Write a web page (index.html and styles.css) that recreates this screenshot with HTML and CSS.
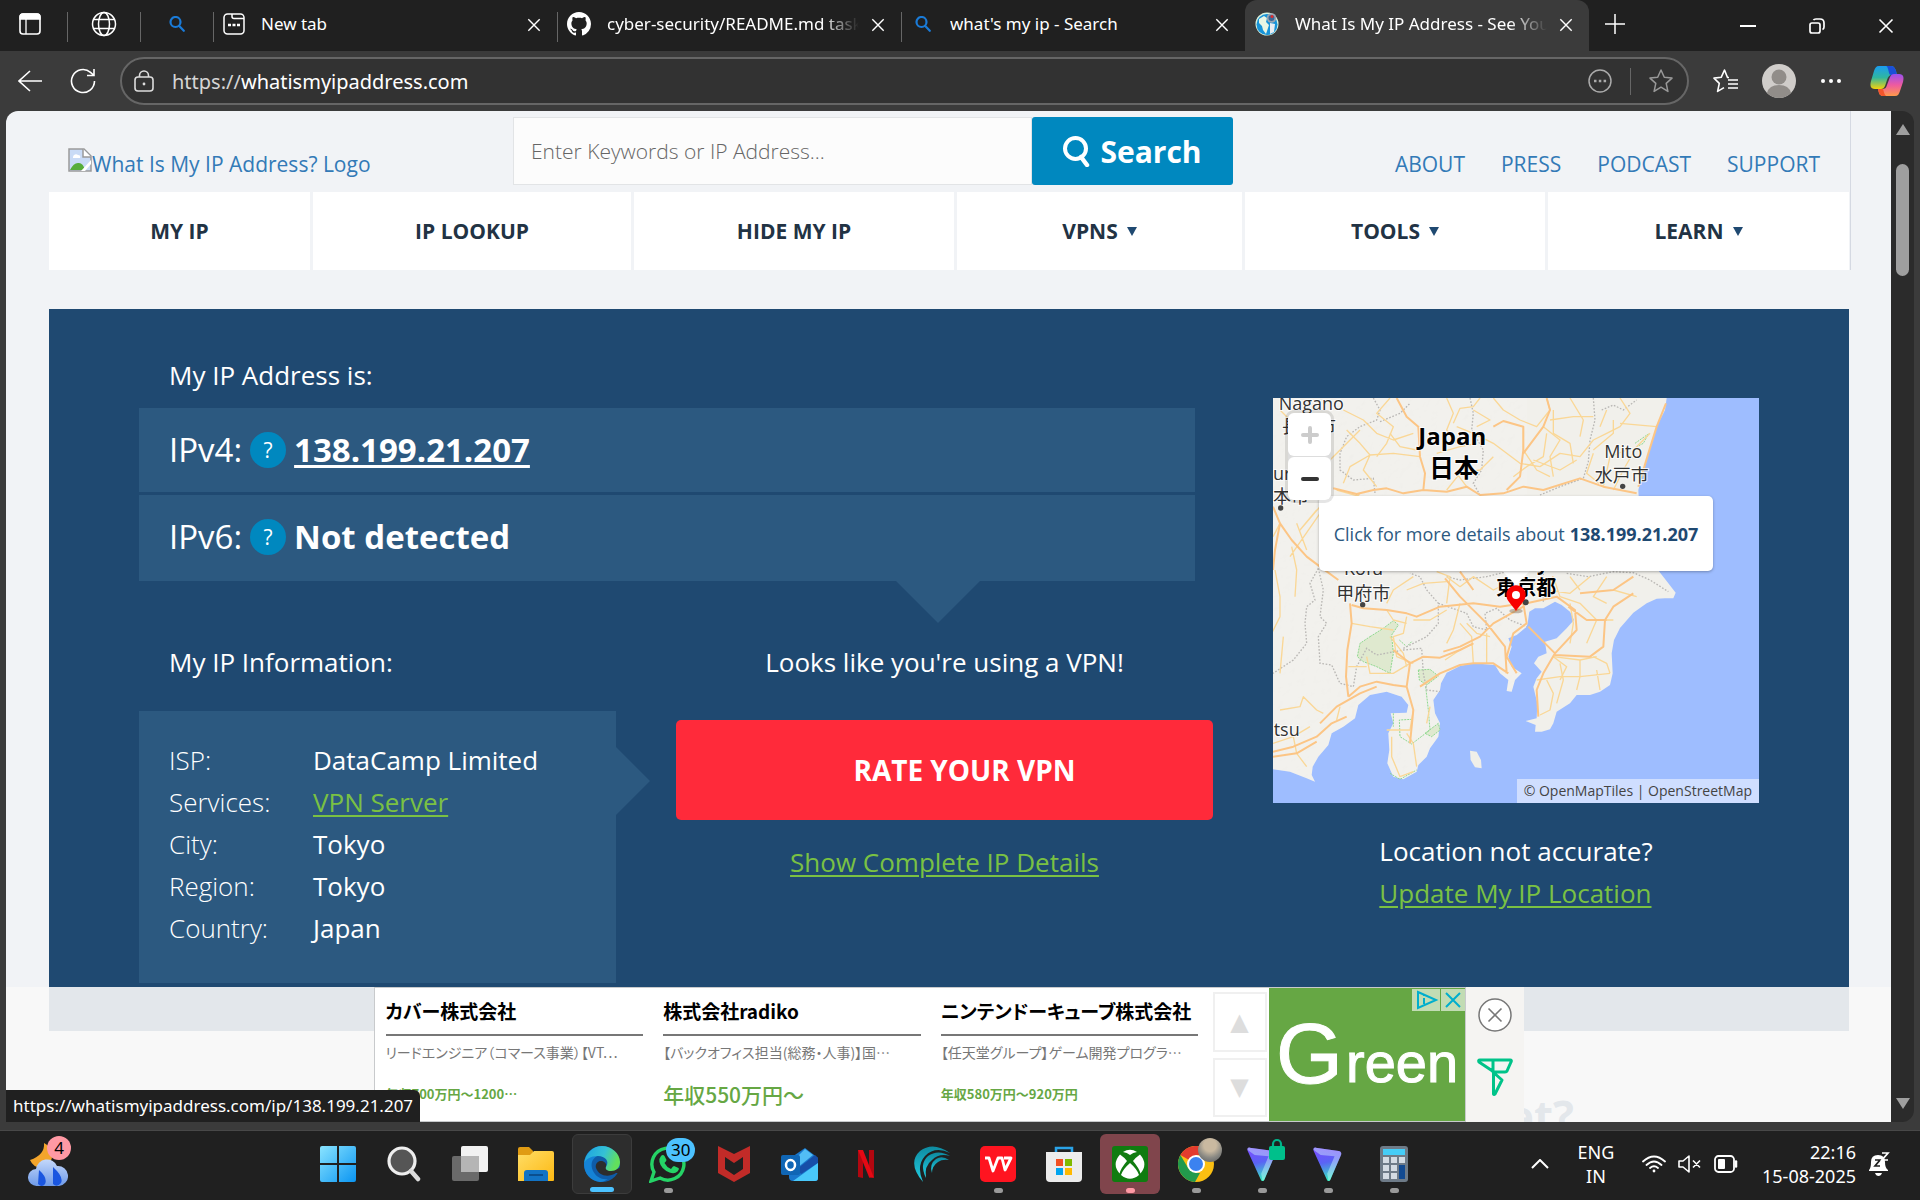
FILE: index.html
```html
<!DOCTYPE html>
<html lang="en">
<head>
<meta charset="utf-8">
<title>What Is My IP Address</title>
<link rel="stylesheet" href="styles.css">
</head>
<body>
<svg class="defs" aria-hidden="true">
  <defs>
    <symbol id="close" viewBox="0 0 16 16"><path d="M1.500 1.500l13 13M14.500 1.500l-13 13" fill="none" stroke="currentColor" stroke-width="1.600"/></symbol>
    <symbol id="lens" viewBox="0 0 16 16"><g fill="none" stroke="#1a7bd8" stroke-width="2.200" stroke-linecap="round"><circle cx="6.500" cy="6" r="5"/><path d="M10 9.800l4.800 5"/></g></symbol>
    <linearGradient id="gWin" x1="0" y1="0" x2="1" y2="1"><stop offset="0" stop-color="#8ae4ff"/><stop offset="1" stop-color="#0a95f2"/></linearGradient>
    <linearGradient id="gEdge" x1="0" y1="0" x2="1" y2="0.300"><stop offset="0" stop-color="#1ba0e2"/><stop offset="0.600" stop-color="#35c1d5"/><stop offset="1" stop-color="#62df5c"/></linearGradient>
    <linearGradient id="gFolder" x1="0" y1="0" x2="1" y2="1"><stop offset="0" stop-color="#ffdd66"/><stop offset="1" stop-color="#fdb913"/></linearGradient>
    <linearGradient id="gCop1" x1="0" y1="0" x2="0" y2="1"><stop offset="0" stop-color="#1b9df0"/><stop offset="0.500" stop-color="#2fb6a0"/><stop offset="1" stop-color="#f5d20a"/></linearGradient>
    <linearGradient id="gCop2" x1="0" y1="0" x2="0" y2="1"><stop offset="0" stop-color="#9a50ee"/><stop offset="0.500" stop-color="#ee5aa0"/><stop offset="1" stop-color="#ff9a4a"/></linearGradient>
    <linearGradient id="gPro" x1="0.300" y1="0" x2="0.500" y2="1"><stop offset="0" stop-color="#7b4dff"/><stop offset="0.450" stop-color="#5a63f5"/><stop offset="1" stop-color="#35f0c0"/></linearGradient>
    <linearGradient id="gPro2" x1="1" y1="0" x2="0.500" y2="1"><stop offset="0" stop-color="#c9b8ff"/><stop offset="1" stop-color="#a8fff0"/></linearGradient>
    <linearGradient id="gCloud" x1="0" y1="0" x2="0" y2="1"><stop offset="0" stop-color="#c4d8fb"/><stop offset="1" stop-color="#6e9ae8"/></linearGradient>
    <linearGradient id="gTeal" x1="0" y1="0" x2="0" y2="1"><stop offset="0" stop-color="#0e8aa0"/><stop offset="1" stop-color="#22d0e4"/></linearGradient>
    <symbol id="proton" viewBox="0 0 36 44"><path d="M3 2l28 4c3 .5 4 3 2.500 5.500L21 41c-1 2.500-3.500 2.500-4.500 0L.5 6C-.5 3.500 .5 1.800 3 2z" fill="url(#gPro)"/><path d="M9 11l17 1.500L17 34l1.500 8c1.200.2 2-.2 2.500-1.500L34 11c1-2.500 0-4.500-3-5L3 2C1 1.800 0 3 .5 5z" fill="url(#gPro2)" opacity="0.550"/></symbol>
  </defs>
</svg>

<header class="tabs">
  <button class="strip-btn" aria-label="Tab actions"><svg width="22" height="24" viewBox="0 0 22 24"><rect x="1" y="2" width="20" height="20" rx="3" fill="none" stroke="#fff" stroke-width="1.600"/><path d="M1 7V5q0-3 3-3h14q3 0 3 3v2zM7 7v15" fill="#fff" stroke="#fff" stroke-width="1.300"/></svg></button>
  <div class="tab pinned"><svg width="26" height="26" viewBox="0 0 26 26" fill="none" stroke="#fff" stroke-width="1.500"><circle cx="13" cy="13" r="11.500"/><ellipse cx="13" cy="13" rx="5.500" ry="11.500"/><path d="M2.500 8.500h21M2.500 17.500h21"/></svg></div>
  <div class="tab pinned"><svg width="16" height="16"><use href="#lens"/></svg></div>
  <div class="tab">
    <svg width="22" height="24" viewBox="0 0 22 24" fill="none" stroke="#fff" stroke-width="1.500"><rect x="1" y="2" width="20" height="20" rx="3.500"/><path d="M9 2v2.500q0 2 2 2h10"/><path d="M5 13h3M9.500 13h3M14 13h3" stroke-width="2.600"/></svg>
    <span class="tab-title">New tab</span>
    <button class="x" aria-label="Close tab"><svg width="14" height="14"><use href="#close"/></svg></button>
  </div>
  <div class="tab">
    <svg width="24" height="24" viewBox="0 0 16 16"><path fill="#fff" d="M8 0C3.580 0 0 3.580 0 8c0 3.540 2.290 6.530 5.470 7.590.4.070.55-.17.55-.38 0-.19-.01-.82-.01-1.490-2.010.37-2.530-.49-2.690-.94-.09-.23-.48-.94-.82-1.130-.28-.15-.68-.52-.01-.53.63-.01 1.080.58 1.230.82.72 1.210 1.870.87 2.330.66.070-.52.280-.87.510-1.070-1.780-.2-3.640-.89-3.640-3.950 0-.87.310-1.590.82-2.150-.08-.2-.36-1.020.08-2.120 0 0 .67-.21 2.200.82.640-.18 1.320-.27 2-.27s1.360.09 2 .27c1.530-1.040 2.200-.82 2.200-.82.440 1.100.160 1.920.080 2.120.510.560.820 1.270.820 2.150 0 3.070-1.870 3.750-3.650 3.950.290.250.540.730.540 1.480 0 1.070-.01 1.930-.01 2.200 0 .21.150.46.550.38A8.010 8.010 0 0 0 16 8c0-4.420-3.580-8-8-8z"/></svg>
    <span class="tab-title fade">cyber-security/README.md task</span>
    <button class="x" aria-label="Close tab"><svg width="14" height="14"><use href="#close"/></svg></button>
  </div>
  <div class="tab last-idle">
    <svg width="16" height="16"><use href="#lens"/></svg>
    <span class="tab-title">what's my ip - Search</span>
    <button class="x" aria-label="Close tab"><svg width="14" height="14"><use href="#close"/></svg></button>
  </div>
  <div class="tab active">
    <svg width="24" height="24" viewBox="0 0 24 24"><circle cx="12" cy="12" r="11.500" fill="#d9f3df"/><circle cx="12" cy="12.500" r="10.500" fill="#1793d8"/><path d="M4 7l5-3 3 2-1 4 3 3-1 3-2 6-3-4-1-4-3-3z" fill="#e8f6e4"/><path d="M15 11l5 1-1 8-4 2z" fill="#e9eef2"/><circle cx="16.500" cy="6" r="4.800" fill="#9aa6b2"/><circle cx="16.500" cy="6" r="3" fill="#3a6a9a"/><circle cx="17" cy="4.500" r="1.500" fill="#e02b2b"/></svg>
    <span class="tab-title fade">What Is My IP Address - See Your</span>
    <button class="x" aria-label="Close tab"><svg width="14" height="14"><use href="#close"/></svg></button>
  </div>
  <button class="new-tab" aria-label="New tab"><svg width="20" height="20" viewBox="0 0 20 20"><path d="M10 0v20M0 10h20" stroke="#fff" stroke-width="1.500"/></svg></button>
  <div class="win-btns">
    <button aria-label="Minimize"><svg width="16" height="16" viewBox="0 0 16 16"><path d="M0 8h16" stroke="#fff" stroke-width="2"/></svg></button>
    <button aria-label="Restore"><svg width="16" height="16" viewBox="0 0 16 16" fill="none" stroke="#fff" stroke-width="1.700"><rect x="1" y="5" width="10" height="10" rx="2"/><path d="M4.500 2.200Q5 1 7 1h4q4 0 4 4v4q0 2-1.500 2.500"/></svg></button>
    <button aria-label="Close"><svg width="16" height="16"><use href="#close"/></svg></button>
  </div>
</header>

<div class="toolbar">
  <button class="back" aria-label="Back"><svg width="24" height="22" viewBox="0 0 24 22" fill="none" stroke="#fff" stroke-width="1.600"><path d="M24 11H1M12 1L1 11l11 10"/></svg></button>
  <button aria-label="Refresh"><svg width="26" height="26" viewBox="0 0 26 26" fill="none" stroke="#fff" stroke-width="1.600"><path d="M24.500 13a11.500 11.500 0 1 1-4-8.700l3 2.700M24 1v6.500h-7"/></svg></button>
  <div class="address">
    <svg width="20" height="22" viewBox="0 0 20 22" fill="none" stroke="#ddd" stroke-width="1.600"><rect x="1" y="7" width="18" height="14" rx="3"/><path d="M5.500 7V5.500a4.500 4.500 0 0 1 9 0V7"/><circle cx="10" cy="14" r="1.400" fill="#ddd" stroke="none"/></svg>
    <span class="url"><span class="scheme">https://</span>whatismyipaddress.com</span>
    <button aria-label="More options"><svg width="24" height="24" viewBox="0 0 24 24" fill="none" stroke="#aaa" stroke-width="1.500"><circle cx="12" cy="12" r="11"/><path d="M6 12h2.500M10.800 12h2.500M15.600 12h2.500" stroke-width="2.400"/></svg></button>
    <i class="divider"></i>
    <button aria-label="Add to favorites"><svg width="24" height="24" viewBox="0 0 24 24" fill="none" stroke="#999" stroke-width="1.500" stroke-linejoin="round"><path d="M12 1l3.300 7.300 7.700.8-5.800 5.300 1.700 8L12 18.200l-6.900 4.200 1.700-8L1 9.100l7.700-.8z"/></svg></button>
  </div>
  <button aria-label="Favorites"><svg width="25" height="24" viewBox="0 0 25 24" fill="none" stroke="#fff" stroke-width="1.600" stroke-linejoin="round"><path d="M16 8.500h-1.500L11.500 1 8.200 8.300 1 9.100l5.300 5.300-1.700 8 6.400-3.800M15 11h10M15 15h10M15 19h10"/></svg></button>
  <button aria-label="Profile"><svg width="34" height="34" viewBox="0 0 34 34"><circle cx="17" cy="17" r="17" fill="#d0cdca"/><circle cx="17" cy="13" r="7.500" fill="#918d89"/><path d="M5 29q2-8 12-8t12 8q-5 5-12 5T5 29z" fill="#918d89"/></svg></button>
  <button class="dots" aria-label="Settings"><svg width="22" height="6" viewBox="0 0 22 6" fill="#fff"><circle cx="3" cy="3" r="2"/><circle cx="11" cy="3" r="2"/><circle cx="19" cy="3" r="2"/></svg></button>
  <button aria-label="Copilot"><svg width="34" height="32" viewBox="0 0 34 32"><path d="M9 1h12c3 0 4 2 5 5l1 4h-5c-3 0-4 2-5 5l-2 6c-1 2-2 3-4 3H5c-5 0-5-4-4-8L4 6c1-3 2-5 5-5z" fill="url(#gCop1)"/><path d="M16 1h5c3 0 4 2 5 5l1 4h-6c-2 0-2-3-3-6-.5-2-1-3-2-3z" fill="#1b4fd8"/><path d="M25 31H13c-3 0-4-2-5-7h4c3 0 4-1 5-4l3-8c1-2 2-3 4-3h5c5 0 5 4 4 8l-3 9c-1 3-2 5-5 5z" fill="url(#gCop2)"/><path d="M13 31c-3 0-4-2-5-7h5c1 3 1 5 3 7z" fill="#f2552c"/></svg></button>
</div>

<div class="viewport">
  <main class="page">
    <div class="site-head">
      <div class="head-row">
        <a class="logo" href="#"><svg width="24" height="24" viewBox="0 0 24 24"><path d="M1 1h15l7 7v15H1z" fill="#c9dbf6" stroke="#9a9a9a" stroke-width="1.500"/><path d="M5 9a3 3 0 0 1 5-2q3 0 2 3H5z" fill="#fff"/><path d="M2 22q4-8 9-7 4 0 6 7z" fill="#56ad3a"/><path d="M15 1v8h8" fill="#fff" stroke="#9a9a9a" stroke-width="1.500"/><path d="M13 23l10-11v4l-6 7z" fill="#fff"/></svg><span>What Is My IP Address? Logo</span></a>
        <form class="search">
          <input type="text" aria-label="Search" placeholder="Enter Keywords or IP Address...">
          <button type="button"><svg width="27" height="31" viewBox="0 0 27 31" fill="none" stroke="#fff" stroke-width="4"><circle cx="12.500" cy="12.500" r="10.500"/><path d="M18 21l6 8" stroke-width="4.500" stroke-linecap="round"/></svg>Search</button>
        </form>
        <nav class="top-links"><a href="#">ABOUT</a><a href="#">PRESS</a><a href="#">PODCAST</a><a href="#">SUPPORT</a></nav>
      </div>
      <nav class="main-nav">
        <a href="#">MY IP</a><a href="#">IP LOOKUP</a><a href="#">HIDE MY IP</a><a href="#">VPNS <i></i></a><a href="#">TOOLS <i></i></a><a href="#">LEARN <i></i></a>
      </nav>
    </div>

    <section class="hero">
      <div class="details">
        <h2>My IP Address is:</h2>
        <div class="ips">
          <p><span>IPv4:</span><button aria-label="About IPv4">?</button><a href="#">138.199.21.207</a></p>
          <p><span>IPv6:</span><button aria-label="About IPv6">?</button><b>Not detected</b></p>
        </div>
        <div class="lower">
          <div class="info">
            <h2>My IP Information:</h2>
            <dl>
              <dt>ISP:</dt><dd>DataCamp Limited</dd>
              <dt>Services:</dt><dd><a href="#">VPN Server</a></dd>
              <dt>City:</dt><dd>Tokyo</dd>
              <dt>Region:</dt><dd>Tokyo</dd>
              <dt>Country:</dt><dd>Japan</dd>
            </dl>
          </div>
          <div class="vpn">
            <h2>Looks like you're using a VPN!</h2>
            <button>RATE YOUR VPN</button>
            <a href="#">Show Complete IP Details</a>
          </div>
        </div>
      </div>
      <div class="where">
        <div class="map">
          <svg class="map-art" viewBox="39 24 1458 1215" preserveAspectRatio="xMidYMid slice">
            <defs>
              <path id="land" d="M39 24H1220L1215 60 1195 100 1180 140 1165 190 1150 240 1135 300 1140 400 1160 470 1198 545 1225 580 1247 608 1240 625 1215 625 1190 626 1160 640 1120 668 1080 714 1062 750 1055 790 1058 850 1050 885 1020 905 990 915 950 915 930 940 890 965 880 1000 870 1018 845 1025 825 1025 827 1005 797 993 830 985 832 940 820 890 830 865 845 845 822 820 835 800 860 790 855 755 890 745 920 715 942 690 930 665 905 645 885 635 850 655 825 655 808 665 803 700 800 710 770 735 745 745 755 770 745 800 755 830 785 850 765 870 755 905 740 903 745 870 720 850 705 825 640 820 600 828 560 848 543 880 540 900 520 930 525 970 540 1000 535 1040 510 1075 500 1100 475 1125 470 1145 430 1168 400 1160 382 1120 388 1080 385 1030 400 1000 392 970 440 968 445 945 425 920 380 905 330 915 295 945 285 985 250 1010 215 1030 205 1065 175 1100 158 1130 155 1155 165 1175 140 1165 90 1145 39 1138Z"/>
              <clipPath id="landClip"><use href="#land"/></clipPath>
              <filter id="relief" x="0" y="0" width="1" height="1"><feTurbulence type="fractalNoise" baseFrequency="0.040" numOctaves="3" seed="4"/><feDiffuseLighting surfaceScale="2" diffuseConstant="1.200" lighting-color="#fff"><feDistantLight azimuth="225" elevation="55"/></feDiffuseLighting></filter>
            </defs>
            <rect x="39" y="24" width="1458" height="1215" fill="#9ebdff"/>
            <use href="#land" fill="#f1f0eb"/>
            <g clip-path="url(#landClip)"><rect x="39" y="24" width="760" height="1215" filter="url(#relief)" opacity="0.120"/></g>
            <path fill="#f0efe9" d="M630 1082L650 1085 663 1110 665 1135 645 1132 632 1110Z"/>
            <path fill="#dfe9cf" stroke="#8fd98f" stroke-width="3" stroke-dasharray="6 3" d="M330 740L370 715 400 692 415 705 395 735 400 790 390 850 350 830 310 815 292 800 300 760Z"/>
            <g fill="#dfe9cf" stroke="#8fd98f" stroke-width="3" stroke-dasharray="6 3"><path d="M475 840L510 838 535 858 500 885 478 870Z"/><path d="M495 1030L535 1000 540 1020 515 1040Z"/><path fill="none" d="M497 890L505 960 510 1020 455 1062 420 1040 418 990 455 988M418 750L440 770 455 755M1125 160L1165 132 1150 160 1130 170M400 970L400 1010M390 1150L420 1168 470 1140"/></g>
            <g fill="none" stroke="#b9b7b4" stroke-width="4" stroke-dasharray="5 5">
              <path d="M340 24L360 60 350 90 300 110 260 140 240 190 240 240 280 270 340 265 345 310M360 95L420 70 450 40M630 24L640 70 635 120 670 180 665 240 640 280 660 315M1000 24L1005 90 990 150 985 215 970 265 900 290 840 315M1025 60L1060 45 1090 60 1130 30M175 535L150 580 165 630 140 650 135 700 140 760 100 810 39 850M175 535L190 600 180 680 200 700 175 740 180 820 215 825 240 880 280 890 290 830 320 775 350 795 430 780 485 775 490 850 500 900 540 905M430 775L500 740 535 700 535 640 500 600 480 560 450 550M560 560L600 570 680 560 740 545M535 640L620 670 640 710 680 720 675 670 710 655 750 690 800 710M850 550L850 640M920 550L985 560 1060 545 1120 548 1170 570 1225 605"/>
            </g>
            <g fill="none" stroke="#fad796" stroke-width="4" stroke-linejoin="round">
              <path d="M250 60L310 90 350 130 400 150 460 130M170 250L250 170 300 120M390 24L350 70 400 110 380 160 350 200M580 100L600 55 640 50 660 24M700 24L730 60 780 90 830 110 870 60 860 24M590 110L640 130 700 160 780 220 840 230 900 190 960 200 1000 150M790 110L790 180 830 240 870 260M880 60L880 130 930 160 940 220M1080 24L1110 70 1080 110 1040 130 1000 150M1170 130L1130 170 1090 240 1060 300M1040 60L1020 110M530 190L600 170 650 160M60 60L90 90M110 400L140 480M45 540L60 620 60 680 30 740M95 470L110 540 105 620M70 740L60 850M230 300L300 320M120 300L170 300M60 960L120 950 130 920 170 960 190 970M39 1060L100 1040 150 1010M560 560L600 590 640 560 700 600 760 570M600 700L635 740 640 820M440 680L430 730 400 740 410 800 460 820M320 800L330 850 400 850 450 820M880 560L900 620 960 640 1010 690 1060 690M1040 560L1000 620 1040 640M930 560L960 600M900 820L910 870 890 940M830 870L900 860 960 860 1050 850M880 800L960 810 1010 800M960 860L950 900M1010 840L1020 900M500 1000L510 950M470 1130L460 1060 440 1030M395 1040L395 1100 420 1160 460 1145M640 760L600 780 555 810M680 730L680 820M860 600L930 610 990 560M380 1020L450 1020 460 960M90 500L180 370"/>
              <path d="M260 120L300 160 330 195 400 190 480 200M330 195L310 240 350 290M330 195L270 230 250 280M390 130L420 170 470 180M560 24L580 70 560 120 590 160M640 60L690 90 650 110M700 200L660 240 600 250 560 300M590 250L620 290M870 90L940 80 1000 80M930 24L970 90 960 140M1060 90L1060 130 1000 180M1080 100L1190 110M1000 190L980 250 1030 290M860 130L850 200 800 230 760 260M850 110L900 150 870 200 880 260M820 210L900 240 950 210M1100 180L1050 200 1030 290M720 580L760 610 800 600 840 570 880 590M460 560L400 600 380 640M560 640L570 560 530 545M440 600L490 580 560 575M380 660L400 690 440 700M460 690L510 690 560 660M275 700L330 710 400 720M265 830L320 830M390 740L430 790 440 830M600 640L580 720 560 760M620 700L650 730 690 740M860 870L880 910 870 960 840 975M880 800L920 830 900 870M960 810L960 860M1000 800L1040 820 1050 850M930 640L940 700 930 760M1060 600L1130 620M1010 690L980 760M39 440L60 400M170 360L120 420 180 350M240 950L230 990M100 1040L110 1090 140 1130M300 310L290 320"/>
            </g>
            <g fill="none" stroke="#fcc585" stroke-width="6" stroke-linejoin="round">
              <path d="M410 24L440 80 475 110 480 200 495 250 490 300 430 310 380 295 340 300 290 312 220 295M490 300L560 305 620 290 660 315 730 310 790 290 850 300 960 265 1030 290 1130 310M700 110L730 93 790 110 790 180 780 260 740 300M860 24L870 60 850 110 790 190M1218 40L1190 110 1165 190 1135 290M39 350L60 400 95 450 140 500 180 530 235 570M60 400L45 480 39 540M270 640L275 700 262 780 258 860 265 920M275 645L310 655 380 660 440 670 470 680 540 650 640 640 720 650 790 640M265 920L300 890 350 875 400 885 440 890 450 820 490 800 540 803 600 780 640 760M440 890L460 960 450 1060M180 1000L230 950 300 910 350 890M39 1085L100 1070 170 1040 215 1000 260 980M39 1100L110 1090 170 1055M400 780L450 820M550 785L600 770 660 740 700 700 790 650M555 565L600 620 680 700 735 770 740 850M600 545L640 600M790 640L800 700 760 730 740 800 770 850M805 710L885 790 950 720 945 660 890 620 800 640M885 790L850 850 830 900 835 980M885 795L990 800 1030 770 1035 690 1060 650 1120 610M925 650L980 690 1040 690M880 560L840 620M1120 560L1060 600 960 610M640 820L700 820 745 850M480 890L540 850 600 825 640 820"/>
            </g>
            <g class="lbl" stroke="#fff" stroke-width="6" stroke-opacity="0.800" paint-order="stroke" fill="#333">
              <text x="56" y="60">Nagano</text><text x="66" y="130">長野市</text><text x="39" y="269">ur</text><text x="39" y="338">本市</text>
              <text x="1033" y="205">Mito</text><text x="1004" y="275">水戸市</text><text x="252" y="556">Kofu</text><text x="229" y="630">甲府市</text><text x="41" y="1038">tsu</text>
              <g class="strong" fill="#000"><text x="475" y="164" class="country">Japan</text><text x="508" y="262" class="big">日本</text><text x="722" y="540">Tokyo</text><text x="709" y="616">東京都</text></g>
            </g>
            <g fill="#444"><circle cx="1088" cy="289" r="8"/><circle cx="62" cy="354" r="8"/><circle cx="308" cy="644" r="8"/><circle cx="797" cy="637" r="9"/></g>
            <ellipse cx="768" cy="663" rx="20" ry="7" fill="#8b7a62" opacity="0.500"/>
            <path fill="#fff" d="M722 538h92l-46 48z"/>
            <path fill="#f80000" d="M768 586c16 0 29 13 29 29 0 18-17 29-29 48-12-19-29-30-29-48 0-16 13-29 29-29z"/><circle cx="768" cy="615" r="12" fill="#fff"/>
          </svg>
          <a class="popup" href="#">Click for more details about <b>138.199.21.207</b></a>
          <div class="zoom"><button aria-label="Zoom in" disabled><svg width="18" height="18" viewBox="0 0 18 18"><path d="M9 2v14M2 9h14" stroke="#ccc" stroke-width="4" stroke-linecap="round"/></svg></button><button aria-label="Zoom out"><svg width="18" height="18" viewBox="0 0 18 18"><path d="M2 9h14" stroke="#333" stroke-width="4" stroke-linecap="round"/></svg></button></div>
          <div class="credit">© OpenMapTiles | OpenStreetMap</div>
        </div>
        <div class="fix"><h2>Location not accurate?</h2><a href="#">Update My IP Location</a></div>
      </div>
    </section>
    <h1 class="next">et?</h1>

    <aside class="sticky-ad">
      <div class="ad">
        <div class="jobs">
          <div><h3>カバー株式会社</h3><p>リードエンジニア（コマース事業）【VT…</p><strong>年収700万円〜1200…</strong></div>
          <div><h3>株式会社radiko</h3><p>【バックオフィス担当(総務・人事)】国…</p><strong class="large">年収550万円〜</strong></div>
          <div><h3>ニンテンドーキューブ株式会社</h3><p>【任天堂グループ】ゲーム開発プログラ…</p><strong>年収580万円〜920万円</strong></div>
        </div>
        <div class="steps"><button>▲</button><button>▼</button></div>
        <div class="brand">
          <svg width="196" height="133" viewBox="0 0 196 133"><g fill="#fff" stroke="#fff" stroke-width="1"><text x="7" y="95" font-size="86">G</text><text x="77" y="94" font-size="56">reen</text></g></svg>
          <div class="choices"><svg width="28" height="22" viewBox="0 0 28 22" fill="none" stroke="#00aecd" stroke-width="2"><path d="M6 3l18 8L6 19zM12 9v6M12 6v1"/></svg><svg width="24" height="22" viewBox="0 0 24 22" stroke="#00aecd" stroke-width="2"><path d="M5 4l14 14M19 4L5 18"/></svg></div>
        </div>
      </div>
      <div class="ad-side">
        <button aria-label="Close ad"><svg width="34" height="34" viewBox="0 0 34 34"><circle cx="17" cy="17" r="16" fill="#fff" stroke="#777" stroke-width="1.500"/><path d="M10.500 10.500l13 13M23.500 10.500l-13 13" stroke="#777" stroke-width="1.600"/></svg></button>
        <svg width="36" height="38" viewBox="0 0 36 38" fill="none" stroke="#00c389" stroke-width="3" stroke-linejoin="round"><path d="M3 2h30q2 0 1 2l-4 9q-.5 1-2 1H17L2 4Q1 2 3 2zM16 3v11l9 8-7 14q-1 1-1.500 0V15"/></svg>
      </div>
    </aside>
  </main>
  <div class="scroll"><i class="up"></i><i class="thumb"></i><i class="down"></i></div>
  <div class="status">https://whatismyipaddress.com/ip/138.199.21.207</div>
</div>

<footer class="taskbar">
  <button class="weather" aria-label="Weather"><svg width="40" height="46" viewBox="0 0 40 46"><path d="M16 2q1 12-14 17 4 9 14 7 9-3 8-14-2-7-8-10z" fill="#f3a52c"/><path d="M9 45a8.500 8.500 0 0 1-1-17 11 11 0 0 1 21-3 9.500 9.500 0 0 1 2 20z" fill="url(#gCloud)"/><path d="M11 29q9 8 6 14-3 4-7 0zM25 26q11 10 8 16-4 5-8 1z" fill="#1a56e0"/></svg><em class="badge pink">4</em></button>
  <div class="apps">
    <button aria-label="Start"><svg width="36" height="36" viewBox="0 0 36 36"><path d="M2 0h15v17H0V2q0-2 2-2zM19 0h15q2 0 2 2v15H19zM0 19h17v17H2q-2 0-2-2zM19 19h17v15q0 2-2 2H19z" fill="url(#gWin)"/></svg></button>
    <button aria-label="Search"><svg width="34" height="36" viewBox="0 0 34 36"><circle cx="15" cy="15" r="13" fill="#555" stroke="#eee" stroke-width="3.200"/><path d="M24 25l7 8" stroke="#ddd" stroke-width="4.500" stroke-linecap="round"/></svg></button>
    <button aria-label="Task view"><svg width="36" height="36" viewBox="0 0 36 36"><rect y="10" width="27" height="25" rx="2" fill="#6a6a6a"/><rect x="9" y="0" width="27" height="26" rx="2" fill="#f2f2f2"/><path d="M9 10h18v16H9z" fill="#b5b5b5"/></svg></button>
    <button aria-label="File Explorer"><svg width="36" height="36" viewBox="0 0 36 36"><path d="M0 3q0-2 2-2h9l4 4v8H0z" fill="#e09b13"/><path d="M0 9h12l4-4h18q2 0 2 2v27q0 1-1 1H0z" fill="url(#gFolder)"/><path d="M6 35v-8q0-3 3-3h18q3 0 3 3v8z" fill="#1273c4"/><path d="M11 29h14" stroke="#0b4f8e" stroke-width="2"/></svg></button>
    <button class="current" aria-label="Edge"><svg width="38" height="38" viewBox="0 0 38 38"><circle cx="19" cy="19" r="18" fill="#0f5ca8"/><path d="M1 19c1-6 7-9 13-8-5 3-7 8-4 15 3 6 9 9 15 8-3 2-5 3-8 3C7 36 1 28 1 19z" fill="#1583d6"/><path d="M23 22c1-4-2-6-5-6-4 0-6 4-5 7 3 8 12 10 20 5h6v-6l-5 2q-6 3-9 1-3-1-2-3z" fill="#2d2d2d"/><path d="M1 19C2 8 10 1 19 1s18 7 18 16c0 6-4 9-9 9-4 0-6-2-5-4 4-6-1-11-8-11C8 11 2 14 1 19z" fill="url(#gEdge)"/></svg></button>
    <button class="open" aria-label="WhatsApp"><svg width="38" height="38" viewBox="0 0 38 38"><path d="M2 36l3-9a16 16 0 1 1 6 6z" fill="none" stroke="#25d366" stroke-width="3.400"/><path d="M12 11q2-2 3.500 0l2 4q0 1-2 3 2 4 6.500 6 2-3 3-3l4.500 2q1 1-1 3.500-3 3-8 1Q12 24 10.500 17q-.5-4 1.500-6z" fill="#25d366"/></svg><em class="badge blue">30</em></button>
    <button aria-label="McAfee"><svg width="32" height="36" viewBox="0 0 32 36"><path d="M0 0l16 8L32 0v27l-16 9-16-9zM7 11v12l9 6 9-6V11l-9 6z" fill="#c22b28" fill-rule="evenodd"/></svg></button>
    <button aria-label="Outlook"><svg width="38" height="34" viewBox="0 0 38 34"><path d="M8 12L24 1l13 10v20q0 3-3 3H12q-4 0-4-4z" fill="#1977cc"/><path d="M14 12L24 2l8 6-16 13z" fill="#52bdf5"/><path d="M16 22L34 8l3 3v5L20 27z" fill="#174ea8"/><path d="M12 34l25-18v15q0 3-3 3z" fill="#49c8fa"/><rect y="8" width="19" height="20" rx="2" fill="#1066b5"/><ellipse cx="9.500" cy="18" rx="4.500" ry="5" fill="none" stroke="#fff" stroke-width="2.500"/></svg></button>
    <button aria-label="Netflix"><svg width="16" height="28" viewBox="0 0 16 28"><path d="M0 0h5v28L0 27zM11 0h5v27l-5 1z" fill="#b20710"/><path d="M0 0h5l11 28-5-1z" fill="#e50914"/></svg></button>
    <button aria-label="Waves"><svg width="38" height="38" viewBox="0 0 38 38" fill="url(#gTeal)"><path d="M10 37Q-6 18 7 6 20-4 37 8 22 1 12 11 3 21 10 37z"/><path d="M13 33Q6 19 15 11 25 4 37 11 26 8 19 15 11 21 13 33z"/><path d="M19 28Q16 19 23 14 29 10 36 15 29 14 25 17 19 21 19 28z"/></svg></button>
    <button class="open" aria-label="WPS Office"><svg width="36" height="36" viewBox="0 0 36 36"><rect width="36" height="36" rx="5" fill="#ff1420"/><path d="M5 12h4l4 13 5-13h4l3 12 6-12h-7" fill="none" stroke="#fff" stroke-width="2.800" stroke-linejoin="round"/></svg></button>
    <button aria-label="Store"><svg width="36" height="36" viewBox="0 0 36 36"><path d="M10 7V2h16v5" fill="none" stroke="#2aa3e8" stroke-width="2.500"/><path d="M0 6h36v26q0 4-4 4H4q-4 0-4-4z" fill="#ececec"/><path d="M10 13h7v7h-7z" fill="#f25022"/><path d="M19 13h7v7h-7z" fill="#7fba00"/><path d="M10 22h7v7h-7z" fill="#00a4ef"/><path d="M19 22h7v7h-7z" fill="#ffb900"/></svg></button>
    <button class="alert" aria-label="Xbox"><svg width="36" height="36" viewBox="0 0 36 36"><rect width="36" height="36" rx="3" fill="#107c10"/><path fill="#fff" d="M8 8.500Q13 12 15 15 9 22 7.500 27.500-.5 18 8 8.500zM28 8.500Q23 12 21 15q6 7 7.500 12.500Q36.500 18 28 8.500zM18 17q7 6 9 12-9 7.500-18 0 2-6 9-12zM11 6q7-4.500 14 0-4 .5-7 3-3-2.500-7-3z"/></svg></button>
    <button class="open" aria-label="Chrome"><svg width="36" height="36" viewBox="0 0 36 36"><circle cx="18" cy="18" r="18" fill="#fbbf12"/><path d="M18 18L2.400 9a18 18 0 0 1 31.200 0H18z" fill="#e33b2e"/><path d="M2.400 9l8 13.500L18 27l4 0-5 9A18 18 0 0 1 2.400 9z" fill="#229a4c"/><circle cx="18" cy="18" r="9" fill="#fff"/><circle cx="18" cy="18" r="7" fill="#3b82f0"/></svg><em class="face"></em></button>
    <button class="open" aria-label="Proton VPN connected"><svg width="36" height="36"><use href="#proton"/></svg><svg class="lock" width="16" height="22" viewBox="0 0 16 22"><path d="M4 9V6a4 4 0 0 1 8 0v3" fill="none" stroke="#00b38a" stroke-width="2.200"/><rect y="8" width="16" height="14" rx="2" fill="#00c08b"/></svg></button>
    <button class="open" aria-label="Proton VPN"><svg width="36" height="36"><use href="#proton"/></svg></button>
    <button class="open" aria-label="Calculator"><svg width="28" height="36" viewBox="0 0 28 36"><rect width="28" height="36" rx="3" fill="#6e7b88"/><path d="M3 3h22v6H3z" fill="#45cdf7"/><path d="M3 11h6v6H3zM11 11h6v6h-6zM19 11h6v6h-6zM3 19h6v6H3zM11 19h6v6h-6zM3 27h6v6H3zM11 27h6v6h-6z" fill="#d3dbe3"/><path d="M19 19h6v14h-6z" fill="#124a91"/></svg></button>
  </div>
  <div class="tray">
    <button aria-label="Hidden icons"><svg width="18" height="10" viewBox="0 0 18 10" fill="none" stroke="#fff" stroke-width="2"><path d="M1 9l8-8 8 8"/></svg></button>
    <button class="lang">ENG<br>IN</button>
    <button class="net" aria-label="Network, volume and battery">
      <svg width="24" height="18" viewBox="0 0 24 18" fill="none" stroke="#fff" stroke-width="1.800" stroke-linecap="round"><path d="M1 6.500q11-10 22 0M4.500 10q7.500-7 15 0M8 13q4-3.500 8 0"/><circle cx="12" cy="16" r="1.400" fill="#fff" stroke="none"/></svg>
      <svg width="24" height="18" viewBox="0 0 24 18" fill="none" stroke="#fff" stroke-width="1.600" stroke-linejoin="round"><path d="M1 6h4l6-5v16l-6-5H1zM15 5.500l7 7M22 5.500l-7 7"/></svg>
      <svg width="24" height="18" viewBox="0 0 24 18"><rect x="1" y="1" width="19" height="16" rx="3.500" fill="none" stroke="#fff" stroke-width="1.800"/><rect x="4" y="4" width="7" height="10" rx="1" fill="#fff"/><path d="M22 6.500v5" stroke="#fff" stroke-width="2.500" stroke-linecap="round"/></svg>
    </button>
    <button class="clock">22:16<br>15-08-2025</button>
    <button class="bell" aria-label="Notifications"><svg width="22" height="24" viewBox="0 0 22 24"><path d="M1 18q2-2 2-8 0-7 7-7t7 7q0 6 3 8v1H1zM7 21h7q-1 3-3.500 3T7 21z" fill="#fff"/><path d="M7 8h5l-5 6h5" fill="none" stroke="#202020" stroke-width="1.700"/><path d="M14 1h6l-6 7h6" fill="none" stroke="#fff" stroke-width="1.700"/></svg></button>
  </div>
</footer>
</body>
</html>
```
FILE: styles.css
```css
* { box-sizing: border-box; }
body { margin: 0; height: 100vh; display: flex; flex-direction: column; overflow: hidden; background: #3b3b3b; color: #fff; font-family: "Open Sans", "Noto Sans CJK JP", sans-serif; }
button { border: 0; padding: 0; background: none; color: inherit; font: inherit; display: flex; align-items: center; justify-content: center; }
svg { display: block; flex: none; }
h1, h2, h3, p, dl, dd { margin: 0; }
.defs { position: absolute; width: 0; height: 0; }

.tabs { height: 51px; flex: none; display: flex; background: #202020; font-family: "Noto Sans", sans-serif; font-size: 17px; }
.strip-btn { width: 67px; padding: 0 7px 3px 0; }
.tab { flex: 0 1 344px; display: flex; align-items: center; gap: 16px; padding: 0 16px 3px 10px; min-width: 0; background: linear-gradient(#666, #666) 0 12px / 1px 30px no-repeat; }
.tab.pinned { flex: 0 0 73px; justify-content: center; padding: 0 0 3px; }
.tab-title { flex: 1; white-space: nowrap; overflow: hidden; line-height: 26px; margin-right: -4px; }
.tab.last-idle { padding-left: 14px; gap: 19px; }
.fade { -webkit-mask-image: linear-gradient(90deg, #000 85%, transparent); mask-image: linear-gradient(90deg, #000 85%, transparent); }
.tab .x { width: 14px; height: 30px; padding-top: 2px; }
.tab.active { background: #3b3b3b; border-radius: 12px 12px 0 0; }
.new-tab { width: 52px; padding-bottom: 3px; }
.win-btns { margin-left: auto; display: flex; }
.win-btns button { width: 69px; }

.toolbar { height: 60px; flex: none; display: flex; align-items: center; padding: 0 16px 0 18px; gap: 24px; background: #3b3b3b; }
.back, .dots { margin-right: 4px; }
.address { flex: 1; height: 48px; display: flex; align-items: center; gap: 18px; padding: 0 14px 0 12px; border: 2px solid #666; border-radius: 24px; background: #323232; font-family: "Noto Sans", sans-serif; font-size: 20px; }
.url { flex: 1; }
.scheme { color: #d5d5d5; }
.divider { width: 1px; height: 27px; background: #666; }

.viewport { position: relative; flex: 1; min-height: 0; display: flex; margin: 0 6px 8px; }
.page { position: relative; flex: 1; min-width: 0; overflow: hidden; background: #f1f3f6; border-top-left-radius: 12px; color: #223650; }
.site-head { margin: 0 40px 0 43px; border-right: 1px solid #d5d9e2; padding-right: 1px; }
.head-row { height: 81px; display: flex; padding: 6px 29px 0 19px; }
.logo { display: flex; width: 445px; padding-top: 31px; font-size: 21px; line-height: 32px; color: #337ab7; text-decoration: none; white-space: nowrap; }
.search { flex: 0 1 720px; height: 68px; display: flex; }
.search input { flex: 1; min-width: 0; border: 1px solid #e2e4e6; background: #fcfcfc; padding: 0 17px; font: 300 21px "Open Sans", sans-serif; color: #333; }
.search input::placeholder { color: #666; opacity: 1; }
.search button { width: 201px; gap: 10px; border-radius: 3px; background: #0088bf; color: #fff; font-size: 30px; font-weight: 700; }
.top-links { margin-left: auto; display: flex; gap: 36px; padding-top: 31px; line-height: 32px; font-size: 21px; font-weight: 500; }
.top-links a { color: #337ab7; text-decoration: none; }
.main-nav { display: grid; grid-template-columns: 261fr 318fr 320fr 285fr 300fr 301fr; gap: 3px; height: 78px; font-size: 21px; font-weight: 700; }
.main-nav a { display: flex; align-items: center; justify-content: center; gap: 9px; background: #fff; color: #223344; text-decoration: none; }
.main-nav i { border: 5px solid transparent; border-top: 9px solid #1f4971; border-bottom: 0; }

.hero { margin: 39px 42px 0 43px; padding: 45px 90px 48px; display: grid; grid-template-columns: minmax(0, 1fr) 486px; gap: 60px; background: #1f4971; color: #fff; font-size: 26px; line-height: 42px; }
.hero h2 { font-size: 26px; font-weight: 400; }
.hero a { color: #7ac143; text-underline-offset: 3px; }
.details > h2 { padding-left: 30px; margin-bottom: 12px; }
.ips { position: relative; margin-right: 18px; display: grid; gap: 3px; font-size: 33px; line-height: 44px; }
.ips p { display: flex; align-items: center; gap: 8px; padding: 20px 30px; background: #2c5980; }
.ips p:last-child { padding-bottom: 22px; }
.ips button { width: 36px; height: 36px; border-radius: 50%; background: #0088bf; font-size: 21px; }
.hero .ips a { color: #fff; font-weight: 700; }
.ips::after { content: ""; position: absolute; top: 100%; left: 757px; border: 42px solid transparent; border-top-color: #2c5980; border-bottom: 0; }
.lower { display: grid; grid-template-columns: 477fr 537fr; gap: 60px; margin-top: 60px; }
.info h2 { padding-left: 30px; margin-bottom: 28px; }
.info dl { position: relative; display: grid; grid-template-columns: 144px 1fr; padding: 28px 30px 34px; background: #2c5980; }
.info dl::after { content: ""; position: absolute; left: 100%; top: 36px; border: 34px solid transparent; border-left-color: #2c5980; border-right: 0; }
.info dt { font-weight: 300; }
.vpn { text-align: center; }
.vpn button { width: 100%; height: 100px; margin: 37px 0 21px; padding-left: 40px; border-radius: 5px; background: #ff2a3a; font-size: 28px; font-weight: 700; }
.where { padding-top: 44px; }
.map { position: relative; height: 405px; overflow: hidden; }
.map-art { width: 100%; height: 100%; }
.lbl { font-size: 54px; }
.strong { font-size: 60px; font-weight: 700; }
.strong .country { font-size: 72px; }
.strong .big { font-size: 74px; }
.zoom { position: absolute; left: 15px; top: 15px; width: 43px; display: grid; gap: 1px; border-radius: 6px; background: #ddd; box-shadow: 0 0 0 3px rgba(0, 0, 0, .1); }
.zoom button { height: 43px; border-radius: 6px; background: #fff; }
.hero .popup { position: absolute; left: 46px; right: 46px; top: 98px; height: 75px; display: flex; align-items: center; justify-content: center; gap: 5px; border-radius: 5px; background: #fff; box-shadow: 0 1px 3px rgba(0, 0, 0, .3); color: #2c5980; font-size: 18px; text-decoration: none; white-space: nowrap; }
.popup b { color: #1f4971; }
.credit { position: absolute; right: 0; bottom: 0; padding: 0 7px; line-height: 24px; background: rgba(255, 255, 255, .5); color: #444; font-size: 14px; }
.fix { width: fit-content; margin: 27px auto 0; }
.next { margin: 55px 317px 0; text-align: right; color: #1f4971; font-size: 44px; font-weight: 700; line-height: 60px; }

.sticky-ad { position: absolute; left: 0; right: 0; bottom: 0; height: 135px; display: flex; justify-content: center; background: rgba(248, 248, 248, .9); }
.ad { width: 1092px; display: flex; border: 1px solid #c8cacc; background: #fff; color: #000; font-family: "Noto Sans CJK JP", sans-serif; }
.jobs { flex: 1; display: grid; grid-template-columns: repeat(3, 1fr); gap: 20px; padding: 0 14px 0 11px; }
.jobs h3 { font-size: 19px; font-weight: 700; line-height: 46px; font-feature-settings: "palt"; border-bottom: 2px solid #777; white-space: nowrap; }
.jobs p { margin: 4px 0 12px; font-size: 14px; line-height: 24px; color: #777; font-feature-settings: "palt"; white-space: nowrap; }
.jobs strong { display: block; font-size: 13px; line-height: 36px; color: #66a744; white-space: nowrap; }
.jobs .large { font-size: 21px; font-weight: 500; }
.steps { width: 56px; display: grid; gap: 6px; padding: 4px 2px 4px 0; }
.steps button { border: 2px solid #f0f0f0; color: #ddd; font: 24px "DejaVu Sans", sans-serif; }
.brand { position: relative; width: 196px; background: #66a744; font-family: "Liberation Sans", sans-serif; }
.choices { position: absolute; top: 1px; right: 0; display: flex; gap: 1px; }
.choices svg { background: rgba(255, 255, 255, .6); }
.ad-side { width: 58px; display: flex; flex-direction: column; align-items: center; gap: 26px; padding-top: 11px; background: #f5f4f2; }

.scroll { width: 23px; display: flex; flex-direction: column; align-items: center; background: #2b2b2b; border-radius: 0 12px 12px 0; padding: 13px 0; }
.up, .down { border: 7px solid transparent; }
.up { border-bottom: 11px solid #9f9f9f; border-top: 0; }
.down { border-top: 11px solid #9f9f9f; border-bottom: 0; margin-top: auto; }
.thumb { width: 13px; height: 112px; margin-top: 29px; border-radius: 7px; background: #9f9f9f; }
.status { position: absolute; left: 0; bottom: 0; padding: 0 7px; line-height: 32px; background: #202020; border-top-right-radius: 6px; font-family: "Noto Sans", sans-serif; font-size: 17px; }

.taskbar { height: 70px; flex: none; display: flex; align-items: center; justify-content: space-between; padding-bottom: 3px; background: #202020; border-top: 1px solid #484848; font-family: "Noto Sans", sans-serif; }
.weather { position: relative; width: 96px; height: 60px; }
.badge { position: absolute; border-radius: 12px; height: 24px; min-width: 24px; padding: 0 5px; color: #000; font-size: 17px; font-style: normal; line-height: 24px; text-align: center; }
.pink { left: 47px; top: 2px; background: #ff99a4; }
.apps { display: flex; gap: 6px; margin-left: 212px; }
.apps button { position: relative; width: 60px; height: 60px; border-radius: 6px; }
.apps .current { background: #2d2d2d; border: 1px solid #3c3c3c; }
.apps .alert { background: #80454c; }
.open::after, .current::after, .alert::after { content: ""; position: absolute; bottom: 1px; width: 9px; height: 5px; border-radius: 3px; background: #9a9a9a; }
.current::after { width: 24px; background: #4cc2ff; }
.alert::after { background: #ff99a4; }
.blue { left: 28px; top: 4px; background: #4cc2ff; }
.face { position: absolute; left: 32px; top: 4px; width: 24px; height: 24px; border-radius: 50%; background: radial-gradient(circle at 50% 30%, #c9b9a0 0 30%, #8b8a84 60%, #55595c); }
.lock { position: absolute; left: 37px; top: 4px; }
.tray { display: flex; align-items: center; margin-left: auto; padding-right: 30px; font-size: 18px; line-height: 24px; }
.lang { width: 60px; margin-left: 17px; }
.net { gap: 12px; margin-left: 16px; }
.clock { width: 106px; margin-left: 12px; text-align: right; justify-content: flex-end; }
.bell { margin-left: 12px; }
```
